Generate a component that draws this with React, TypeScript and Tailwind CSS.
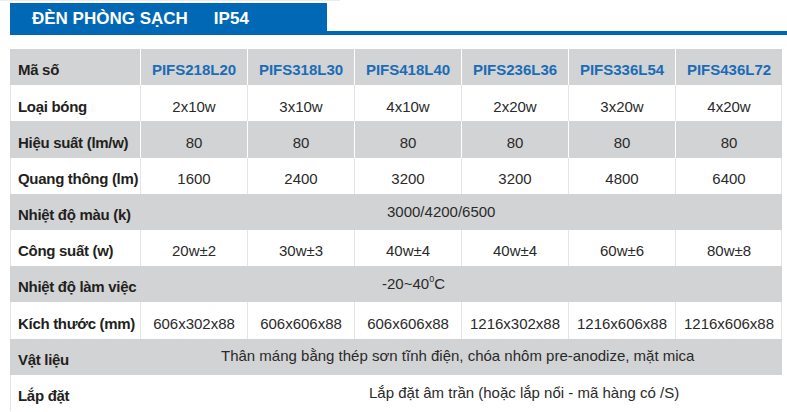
const models = ["PIFS218L20", "PIFS318L30", "PIFS418L40", "PIFS236L36", "PIFS336L54", "PIFS436L72"];

type Row = {
    label: string;
    gray: boolean;
    cells?: string[];
    merged?: React.ReactNode;
    mergedPad?: string;
};

const rows: Row[] = [
    { label: "Loại bóng", gray: false, cells: ["2x10w", "3x10w", "4x10w", "2x20w", "3x20w", "4x20w"] },
    { label: "Hiệu suất (lm/w)", gray: true, cells: ["80", "80", "80", "80", "80", "80"] },
    { label: "Quang thông (lm)", gray: false, cells: ["1600", "2400", "3200", "3200", "4800", "6400"] },
    { label: "Nhiệt độ màu (k)", gray: true, merged: "3000/4200/6500", mergedPad: "pl-[247px]" },
    { label: "Công suất (w)", gray: false, cells: ["20w±2", "30w±3", "40w±4", "40w±4", "60w±6", "80w±8"] },
    {
        label: "Nhiệt độ làm việc",
        gray: true,
        merged: (
            <>
                -20~40<sup className="text-[9px] -top-[5px]">0</sup>C
            </>
        ),
        mergedPad: "pl-[242px]",
    },
    {
        label: "Kích thước (mm)",
        gray: false,
        cells: ["606x302x88", "606x606x88", "606x606x88", "1216x302x88", "1216x606x88", "1216x606x88"],
    },
    {
        label: "Vật liệu",
        gray: true,
        merged: "Thân máng bằng thép sơn tĩnh điện, chóa nhôm pre-anodize, mặt mica",
        mergedPad: "pl-[81px]",
    },
    { label: "Lắp đặt", gray: false, merged: "Lắp đặt âm trần (hoặc lắp nổi - mã hàng có /S)", mergedPad: "pl-[229px]" },
];

function SpecRow({ row, last }: { row: Row; last: boolean }) {
    // white rows get a thin grey frame drawn inside, so widths stay exact
    const frame = row.gray
        ? "bg-[#d2d3d5]"
        : last
            ? "bg-white shadow-[inset_1px_0_0_#e4e4e4]"
            : "bg-white shadow-[inset_1px_0_0_#e4e4e4,inset_-1px_0_0_#e4e4e4]";
    const sep = row.gray ? "border-white" : "border-[#e4e4e4]";
    return (
        <div className={`flex h-[36.2px] ${frame}`}>
            <div className="w-[130px] shrink-0 flex items-center pl-[8px] pt-[7px] font-bold text-[15px] tracking-[-0.3px] text-[#231f20] whitespace-nowrap">
                {row.label}
            </div>
            {row.cells ? (
                row.cells.map((c, i) => (
                    <div
                        key={i}
                        className={`w-[107px] shrink-0 flex items-center justify-center pt-[7px] border-l ${sep} text-[15px] text-[#2a2a2a] whitespace-nowrap`}
                    >
                        {c}
                    </div>
                ))
            ) : (
                <div className={`flex-1 flex items-center ${row.mergedPad} text-[15px] text-[#2a2a2a] whitespace-nowrap`}>
                    {row.merged}
                </div>
            )}
        </div>
    );
}

export default function App() {
    return (
        <div className="w-[787px] h-[412px] overflow-hidden bg-white" style={{ fontFamily: '"Liberation Sans", Arial, sans-serif' }}>
            <div className="h-px w-[340px] bg-[#ececec]" />

            {/* Title bar */}
            <div className="flex mt-[2px]">
                <div className="w-[10px] shrink-0" />
                <div className="w-[317px] h-[32px] bg-[#0068b4] flex items-center pl-[22px] text-white font-bold text-[17px] gap-[26px]">
                    <span>ĐÈN PHÒNG SẠCH</span>
                    <span>IP54</span>
                </div>
                <div className="flex-1 self-end h-[4px] bg-[#0068b4]" />
            </div>

            {/* Spec table */}
            <div className="ml-[10px] mt-[14px] w-[772px]">
                <div className="flex h-[36.2px] bg-[#d2d3d5]">
                    <div className="w-[130px] shrink-0 flex items-center pl-[8px] pt-[7px] font-bold text-[15px] tracking-[-0.3px] text-[#231f20]">
                        Mã số
                    </div>
                    {models.map((m) => (
                        <div
                            key={m}
                            className="w-[107px] shrink-0 flex items-center justify-center pt-[7px] border-l border-white font-bold text-[15px] text-[#1b6cb5]"
                        >
                            {m}
                        </div>
                    ))}
                </div>
                {rows.map((r, i) => (
                    <SpecRow key={r.label} row={r} last={i === rows.length - 1} />
                ))}
            </div>
        </div>
    );
}
